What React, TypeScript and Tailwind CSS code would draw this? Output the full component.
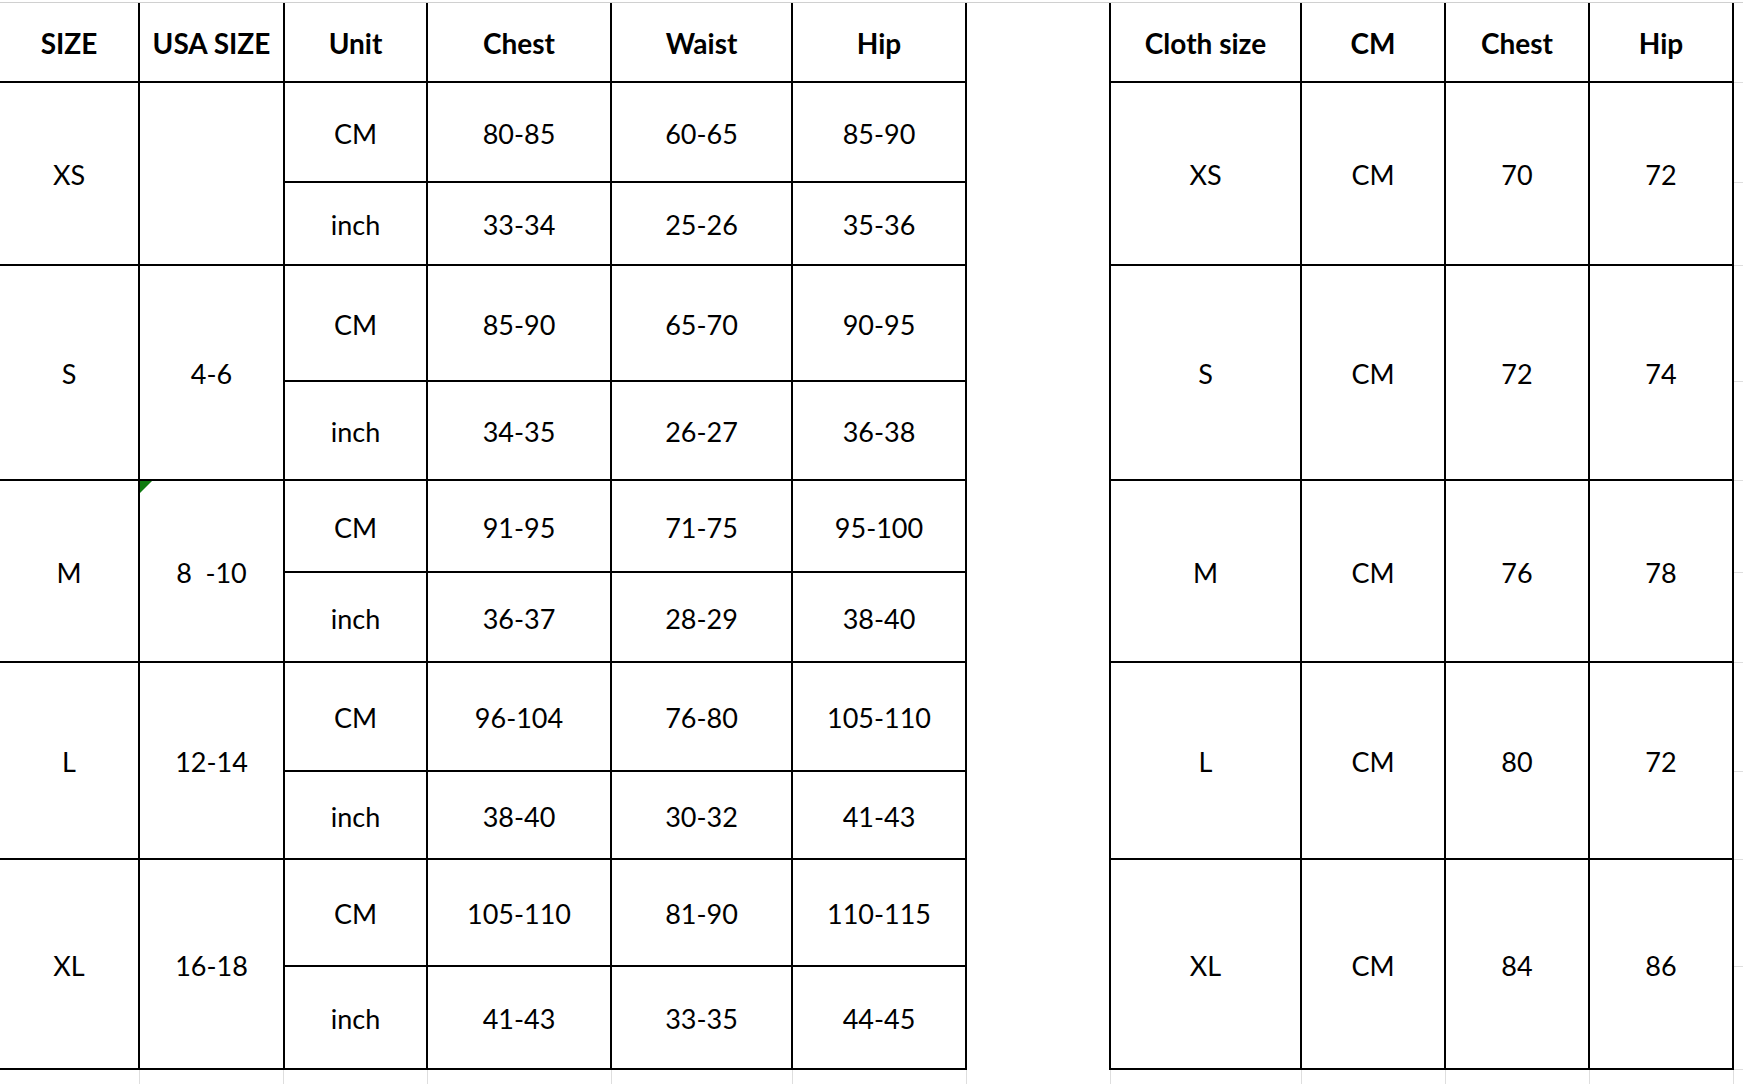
const SIZES = [
  { size: "XS", usa: "", cm: ["80-85", "60-65", "85-90"], inch: ["33-34", "25-26", "35-36"] },
  { size: "S", usa: "4-6", cm: ["85-90", "65-70", "90-95"], inch: ["34-35", "26-27", "36-38"] },
  { size: "M", usa: "8\u2002-10", cm: ["91-95", "71-75", "95-100"], inch: ["36-37", "28-29", "38-40"], flag: true },
  { size: "L", usa: "12-14", cm: ["96-104", "76-80", "105-110"], inch: ["38-40", "30-32", "41-43"] },
  { size: "XL", usa: "16-18", cm: ["105-110", "81-90", "110-115"], inch: ["41-43", "33-35", "44-45"] },
];

const CLOTH = [
  { size: "XS", chest: "70", hip: "72" },
  { size: "S", chest: "72", hip: "74" },
  { size: "M", chest: "76", hip: "78" },
  { size: "L", chest: "80", hip: "72" },
  { size: "XL", chest: "84", hip: "86" },
];

// sheet gridline rows to the right of the tables
const STRIP = [80, 100, 83, 116, 99, 92, 90, 109, 88, 107, 103];
// faint column lines under the tables
const BOTTOM = [140, 144, 144, 184, 181, 174, 144, 191, 144, 144, 144];

function Cell({ children, className = "" }: { children?: React.ReactNode; className?: string }) {
  return <div className={`bg-white flex items-center justify-center pt-[2px] ${className}`}>{children}</div>;
}

function Head({ children }: { children: React.ReactNode }) {
  return <Cell className="font-bold text-[28px]">{children}</Cell>;
}

export default function App() {
  return (
    <div className="w-[1743px] h-[1084px] bg-white overflow-hidden font-['Lato',sans-serif] text-black text-[27px] leading-none">
      <div className="pt-[2px]">
        <div className="flex border-t border-[#d0d0d0]">
          {/* left table */}
          <div className="grid grid-cols-[138px_143px_141px_182px_179px_172px] grid-rows-[78px_98px_81px_114px_97px_90px_88px_107px_86px_105px_101px] gap-[2px] bg-black pr-[2px] pb-[2px]">
            {["SIZE", "USA SIZE", "Unit", "Chest", "Waist", "Hip"].map((h) => (
              <Head key={h}>{h}</Head>
            ))}
            {SIZES.map((s) => (
              <>
                <Cell key={s.size + "a"} className="row-span-2">{s.size}</Cell>
                <Cell key={s.size + "b"} className="row-span-2 relative">
                  {s.flag && (
                    <svg className="absolute left-0 top-0" width="12" height="12" viewBox="0 0 12 12">
                      <path d="M0 0H12L0 12Z" fill="#0f7b0f" />
                    </svg>
                  )}
                  {s.usa}
                </Cell>
                <Cell key={s.size + "c"}>CM</Cell>
                {s.cm.map((v, i) => (
                  <Cell key={s.size + "cm" + i}>{v}</Cell>
                ))}
                <Cell key={s.size + "d"}>inch</Cell>
                {s.inch.map((v, i) => (
                  <Cell key={s.size + "in" + i}>{v}</Cell>
                ))}
              </>
            ))}
          </div>

          <div className="w-[142px]" />

          {/* right table */}
          <div className="grid grid-cols-[189px_142px_142px_142px] grid-rows-[78px_98px_81px_114px_97px_90px_88px_107px_86px_105px_101px] gap-[2px] bg-black px-[2px] pb-[2px]">
            {["Cloth size", "CM", "Chest", "Hip"].map((h) => (
              <Head key={h}>{h}</Head>
            ))}
            {CLOTH.map((c) => (
              <>
                <Cell key={c.size + "a"} className="row-span-2">{c.size}</Cell>
                <Cell key={c.size + "b"} className="row-span-2">CM</Cell>
                <Cell key={c.size + "c"} className="row-span-2">{c.chest}</Cell>
                <Cell key={c.size + "d"} className="row-span-2">{c.hip}</Cell>
              </>
            ))}
          </div>

          <div className="flex-1 flex flex-col">
            {STRIP.map((h, i) => (
              <div key={i} className="border-b border-[#dedede] box-border" style={{ height: h }} />
            ))}
          </div>
        </div>
      </div>

      <div className="flex h-[14px]">
        {BOTTOM.map((w, i) => (
          <div key={i} className="h-full box-border border-r border-[#dedede]" style={{ width: w }} />
        ))}
      </div>
    </div>
  );
}
